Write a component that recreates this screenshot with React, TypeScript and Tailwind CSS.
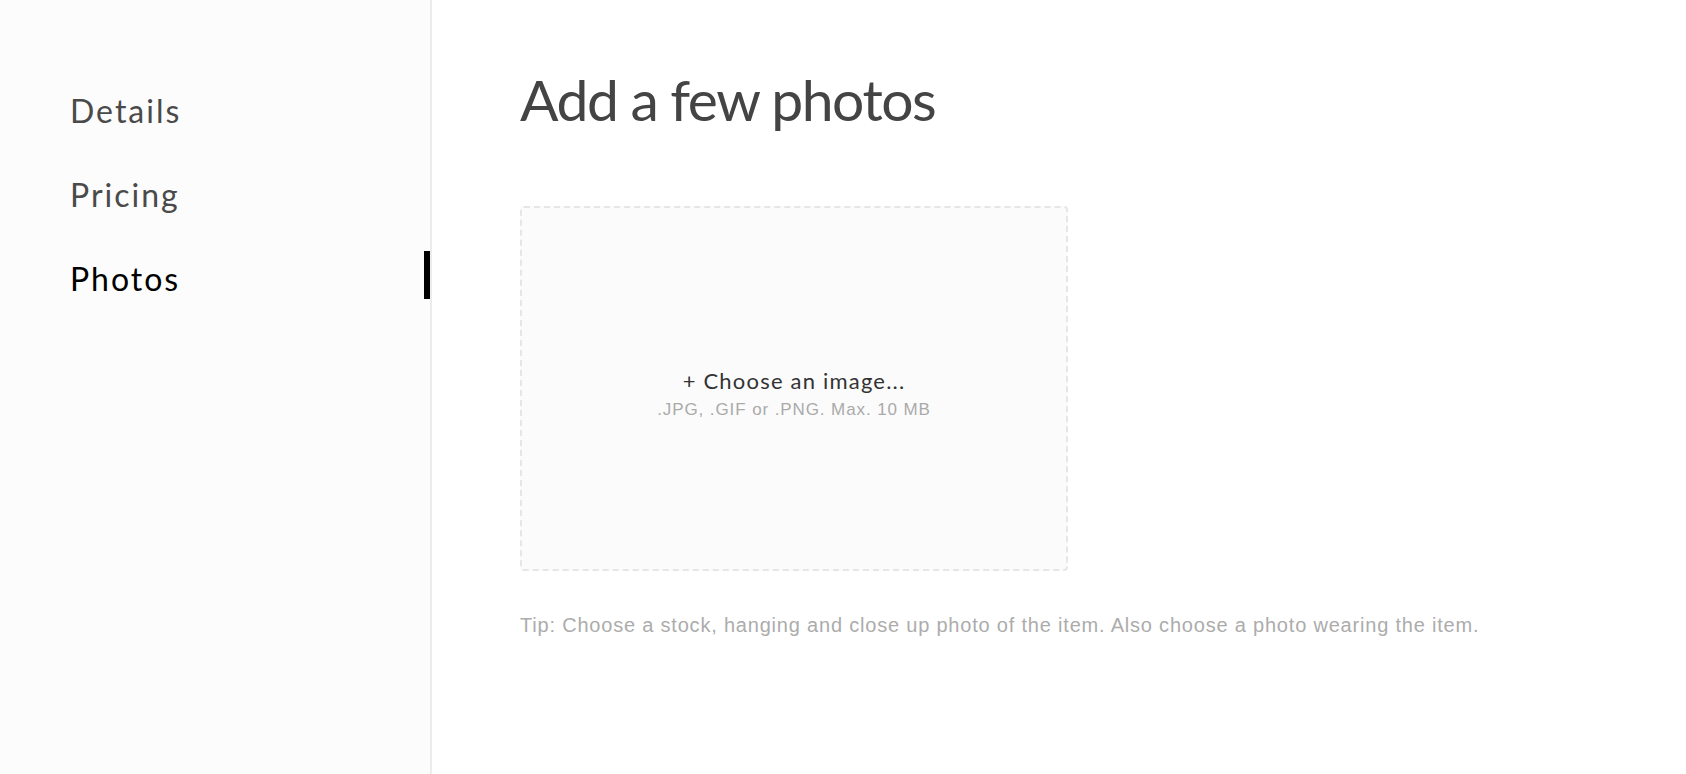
import React from "react";

const heading = { fontFamily: "Lato, 'Noto Sans', sans-serif" };
const body = { fontFamily: "'Liberation Sans', Arial, sans-serif" };

export default function App() {
  const items = [
    { label: "Details", active: false },
    { label: "Pricing", active: false },
    { label: "Photos", active: true },
  ];
  return (
    <div className="flex h-[774px] w-full bg-white">
      <aside className="w-[432px] shrink-0 border-r-2 border-[#ececec] bg-[#fcfcfc] pt-[83px]">
        <nav className="flex flex-col gap-[36px]">
          {items.map((it) => (
            <div key={it.label} className="relative flex h-[48px] items-center pl-[70px]">
              <span
                style={heading}
                className={`mt-[7px] text-[32px] leading-none tracking-[2px] ${it.active ? "text-black" : "text-[#4a4a4a]"}`}
              >
                {it.label}
              </span>
              {it.active && <div className="absolute right-0 top-0 h-full w-[6px] bg-black" />}
            </div>
          ))}
        </nav>
      </aside>
      <main className="flex-1 pl-[88px] pt-[71px]">
        <h1 style={heading} className="text-[57px] leading-none tracking-[-1.5px] text-[#444444]">
          Add a few photos
        </h1>
        <div className="mt-[78px] flex h-[365px] w-[548px] flex-col items-center justify-center rounded-[4px] border-2 border-dashed border-[#e6e6e6] bg-[#fbfbfb]">
          <div style={heading} className="mt-[10px] text-[22px] leading-[26px] tracking-[1.2px] text-[#333333]">
            + Choose an image...
          </div>
          <div style={body} className="mt-[6px] text-[17px] leading-[20px] tracking-[0.9px] text-[#aaaaaa]">
            .JPG, .GIF or .PNG. Max. 10 MB
          </div>
        </div>
        <p style={body} className="mt-[44px] text-[20px] leading-none tracking-[0.8px] text-[#acacac]">
          Tip: Choose a stock, hanging and close up photo of the item. Also choose a photo wearing the item.
        </p>
      </main>
    </div>
  );
}
